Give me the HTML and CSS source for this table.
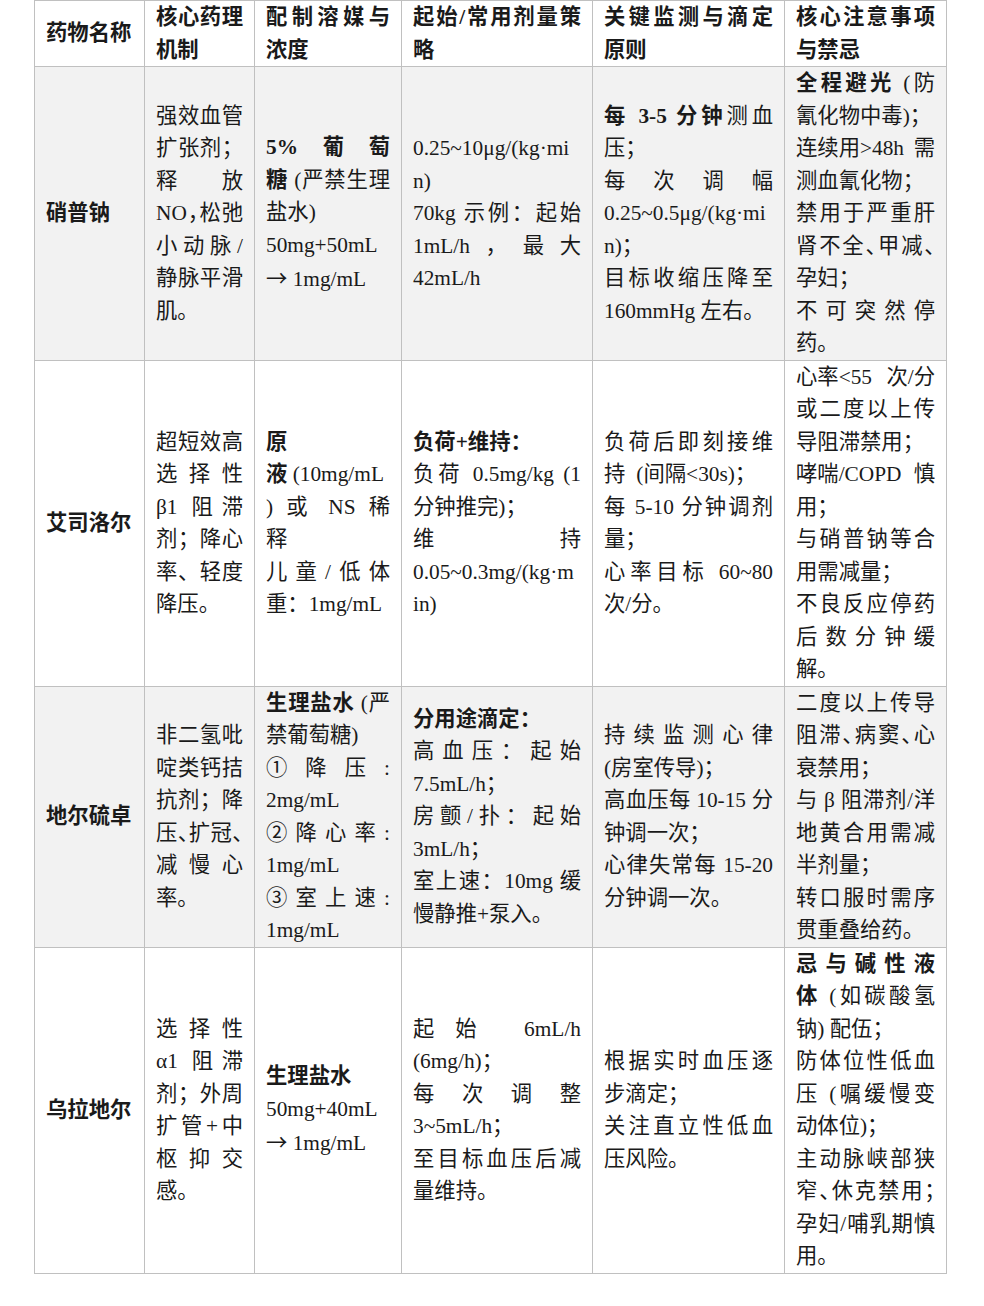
FILE: index.html
```html
<!DOCTYPE html>
<html lang="zh-CN">
<head>
<meta charset="utf-8">
<title>降压药物泵入表</title>
<link rel="stylesheet" href="styles.css">
</head>
<body>
<table class="grid">
  <colgroup>
    <col class="c1"><col class="c2"><col class="c3"><col class="c4"><col class="c5"><col class="c6">
  </colgroup>
  <thead>
    <tr>
      <th>药物名称</th>
      <th><div class="j">核心药理</div><div>机制</div></th>
      <th><div class="j">配制溶媒与</div><div>浓度</div></th>
      <th><div class="j">起始/常用剂量策</div><div>略</div></th>
      <th><div class="j">关键监测与滴定</div><div>原则</div></th>
      <th><div class="j">核心注意事项</div><div>与禁忌</div></th>
    </tr>
  </thead>
  <tbody>
    <tr class="alt">
      <td class="name">硝普钠</td>
      <td>
        <div class="j">强效血管</div>
        <div class="j">扩张剂；</div>
        <div class="j">释放</div>
        <div class="j">NO<span class="hw">，</span>松弛</div>
        <div class="j">小动脉/</div>
        <div class="j">静脉平滑</div>
        <div>肌。</div>
      </td>
      <td>
        <div class="j"><b>5%葡萄</b></div>
        <div class="j"><b>糖</b> (严禁生理</div>
        <div>盐水)</div>
        <div>50mg+50mL</div>
        <div><span class="ar">→</span> 1mg/mL</div>
      </td>
      <td>
        <div>0.25~10μg/(kg·mi</div>
        <div>n)</div>
        <div class="j">70kg 示例：起始</div>
        <div class="j">1mL/h，最大</div>
        <div>42mL/h</div>
      </td>
      <td>
        <div class="j"><b>每 3-5 分钟</b>测血</div>
        <div>压；</div>
        <div class="j">每次调幅</div>
        <div>0.25~0.5μg/(kg·mi</div>
        <div>n)；</div>
        <div class="j">目标收缩压降至</div>
        <div>160mmHg 左右。</div>
      </td>
      <td>
        <div class="j"><b>全程避光</b> (防</div>
        <div>氰化物中毒)；</div>
        <div class="sb"><span>连续用&gt;48h</span><span>需</span></div>
        <div>测血氰化物；</div>
        <div class="j">禁用于严重肝</div>
        <div class="j">肾不全<span class="hw">、</span>甲减<span class="hw">、</span></div>
        <div>孕妇；</div>
        <div class="j">不可突然停</div>
        <div>药。</div>
      </td>
    </tr>
    <tr>
      <td class="name">艾司洛尔</td>
      <td>
        <div class="j">超短效高</div>
        <div class="j">选择性</div>
        <div class="j">β1 阻滞</div>
        <div class="j">剂；降心</div>
        <div class="j">率、轻度</div>
        <div>降压。</div>
      </td>
      <td>
        <div><b>原</b></div>
        <div><b>液</b> (10mg/mL</div>
        <div class="j">) 或 NS 稀</div>
        <div>释</div>
        <div class="j">儿童/低体</div>
        <div>重：1mg/mL</div>
      </td>
      <td>
        <div><b>负荷+维持：</b></div>
        <div class="j">负荷 0.5mg/kg (1</div>
        <div>分钟推完)；</div>
        <div class="j">维持</div>
        <div>0.05~0.3mg/(kg·m</div>
        <div>in)</div>
      </td>
      <td>
        <div class="j">负荷后即刻接维</div>
        <div class="gap">持<span>(间隔&lt;30s)；</span></div>
        <div class="j">每 5-10 分钟调剂</div>
        <div>量；</div>
        <div class="j">心率目标 60~80</div>
        <div>次/分。</div>
      </td>
      <td>
        <div class="sb"><span>心率&lt;55</span><span>次/分</span></div>
        <div class="j">或二度以上传</div>
        <div>导阻滞禁用；</div>
        <div class="sb"><span>哮喘/COPD</span><span>慎</span></div>
        <div>用；</div>
        <div class="j">与硝普钠等合</div>
        <div>用需减量；</div>
        <div class="j">不良反应停药</div>
        <div class="j">后数分钟缓</div>
        <div>解。</div>
      </td>
    </tr>
    <tr class="alt">
      <td class="name">地尔硫卓</td>
      <td>
        <div class="j">非二氢吡</div>
        <div class="j">啶类钙拮</div>
        <div class="j">抗剂；降</div>
        <div class="j">压<span class="hw">、</span>扩冠<span class="hw">、</span></div>
        <div class="j">减慢心</div>
        <div>率。</div>
      </td>
      <td>
        <div class="j"><b>生理盐水</b> (严</div>
        <div>禁葡萄糖)</div>
        <div class="j">①降压:</div>
        <div>2mg/mL</div>
        <div class="j">②降心率:</div>
        <div>1mg/mL</div>
        <div class="j">③室上速:</div>
        <div>1mg/mL</div>
      </td>
      <td>
        <div><b>分用途滴定：</b></div>
        <div class="j">高血压：起始</div>
        <div>7.5mL/h；</div>
        <div class="j">房颤/扑：起始</div>
        <div>3mL/h；</div>
        <div class="j">室上速：10mg 缓</div>
        <div>慢静推+泵入。</div>
      </td>
      <td>
        <div class="j">持续监测心律</div>
        <div>(房室传导)；</div>
        <div class="j">高血压每 10-15 分</div>
        <div>钟调一次；</div>
        <div class="j">心律失常每 15-20</div>
        <div>分钟调一次。</div>
      </td>
      <td>
        <div class="j">二度以上传导</div>
        <div class="j">阻滞<span class="hw">、</span>病窦<span class="hw">、</span>心</div>
        <div>衰禁用；</div>
        <div class="j">与 β 阻滞剂/洋</div>
        <div class="j">地黄合用需减</div>
        <div>半剂量；</div>
        <div class="j">转口服时需序</div>
        <div>贯重叠给药。</div>
      </td>
    </tr>
    <tr>
      <td class="name">乌拉地尔</td>
      <td>
        <div class="j">选择性</div>
        <div class="j">α1 阻滞</div>
        <div class="j">剂；外周</div>
        <div class="j">扩管+中</div>
        <div class="j">枢抑交</div>
        <div>感。</div>
      </td>
      <td>
        <div><b>生理盐水</b></div>
        <div>50mg+40mL</div>
        <div><span class="ar">→</span> 1mg/mL</div>
      </td>
      <td>
        <div class="j">起始 6mL/h</div>
        <div>(6mg/h)；</div>
        <div class="j">每次调整</div>
        <div>3~5mL/h；</div>
        <div class="j">至目标血压后减</div>
        <div>量维持。</div>
      </td>
      <td>
        <div class="j">根据实时血压逐</div>
        <div>步滴定；</div>
        <div class="j">关注直立性低血</div>
        <div>压风险。</div>
      </td>
      <td>
        <div class="j"><b>忌与碱性液</b></div>
        <div class="j"><b>体</b> (如碳酸氢</div>
        <div>钠) 配伍；</div>
        <div class="j">防体位性低血</div>
        <div class="j">压 (嘱缓慢变</div>
        <div>动体位)；</div>
        <div class="j">主动脉峡部狭</div>
        <div class="j">窄<span class="hw">、</span>休克禁用<span class="hw">；</span></div>
        <div class="j">孕妇/哺乳期慎</div>
        <div>用。</div>
      </td>
    </tr>
  </tbody>
</table>
</body>
</html>
```
FILE: styles.css
```css
html, body {
  margin: 0;
  padding: 0;
  background: #ffffff;
}

body {
  font-family: "Liberation Serif", "Noto Sans CJK SC", serif;
  font-size: 21.33px;
  line-height: 32.5px;
  color: #1a1a1a;
}

.grid {
  border-collapse: collapse;
  table-layout: fixed;
  width: 912px;
  margin: 0 0 0 34px;
}

.c1 { width: 110px; }
.c2 { width: 110px; }
.c3 { width: 147px; }
.c4 { width: 191px; }
.c5 { width: 192px; }
.c6 { width: 162px; }

.grid th,
.grid td {
  border: 1px solid #c0c0c0;
  padding: 0 11px;
  vertical-align: middle;
  text-align: left;
}

.grid th {
  font-weight: bold;
  background: #ffffff;
}

.grid td {
  font-weight: normal;
}

.grid tr.alt td {
  background: #f2f2f2;
}

.grid td.name {
  font-weight: bold;
}

.j {
  text-align: justify;
  text-align-last: justify;
}

.sb {
  display: flex;
  justify-content: space-between;
}

.gap {
  display: flex;
  gap: 11px;
}

.hw {
  font-feature-settings: "halt" 1;
}

.ar {
  font-family: "Noto Sans CJK SC", sans-serif;
}

b {
  font-weight: bold;
}
```
